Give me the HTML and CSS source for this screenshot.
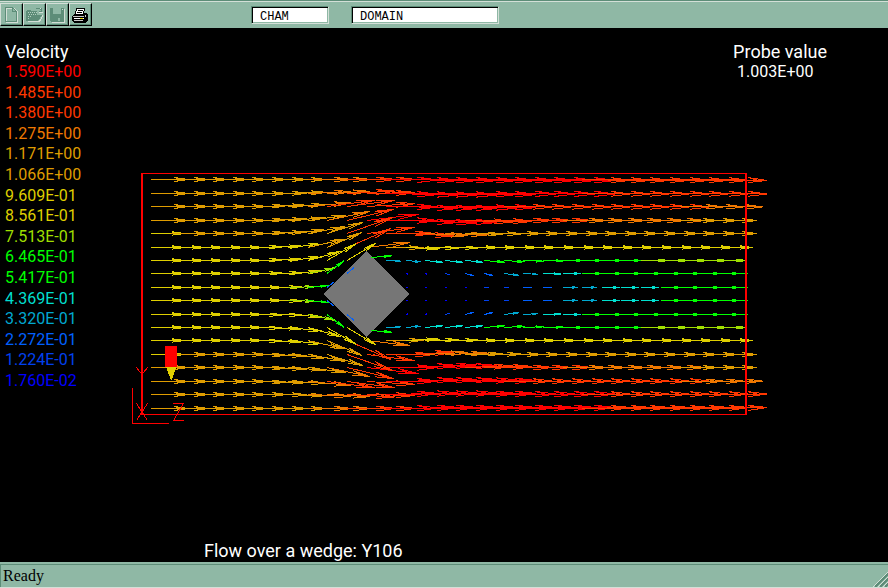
FILE: index.html
```html
<!DOCTYPE html>
<html lang="en">
<head>
<meta charset="utf-8">
<title>Flow over a wedge</title>
<link rel="stylesheet" href="styles.css">
</head>
<body>
<header class="toolbar">
  <div class="tools">
    <button class="tool" type="button" aria-label="New">
      <svg viewBox="0 0 18 18"><path class="hi" d="M4.500 2.500h8l3 3v11h-11z"/><path class="lo" d="M3.500 1.500h7l4 4v10h-11zM10.500 1.500v4h4"/></svg>
    </button>
    <button class="tool" type="button" aria-label="Open">
      <svg viewBox="0 0 18 18"><path class="hi" d="M2.500 15.500h12l4-7M12.500 2.500h3l2 3M13.500 6.500h4"/><path class="fill" d="M1 5h1v-1h4v1h6v4h5l-4 6H1z"/><path class="check" d="M2.500 6.500h9M3.500 8.500h7M2.500 10.500h3M2.500 12.500h2"/><path class="lo" d="M10.500 3.500l1-1h3l2 2M16.500 2v3.500h-3"/></svg>
    </button>
    <button class="tool" type="button" aria-label="Save">
      <svg viewBox="0 0 18 18"><path class="hi" d="M16.500 3v13.500h-13"/><path class="fill" d="M2 2h14v14H3l-1-1z"/><path class="face" d="M5 2h8v6H5zM10 12h2v3h-2z"/><path class="hi" d="M14.500 3v1"/></svg>
    </button>
    <button class="tool" type="button" aria-label="Print">
      <svg viewBox="0 0 18 18"><path d="M2 9l2-2h12l1 2v5l-3 3H3l-2-2v-5z" fill="#000"/><path d="M6 2h8l-2 6H4z" fill="#fff" stroke="#000"/><path d="M7 4.500h5M6 6.500h5" stroke="#000"/><path d="M2 10h11v1H2zM3 14h9v1H3zM14 9l1-1v2l-1 1z" fill="#c8c8c8"/><path d="M3 12h10v1H3z" fill="#fff"/><path d="M9 12h3v1H9z" fill="#e8d800"/></svg>
    </button>
  </div>
  <input class="field field-short" type="text" value="CHAM" aria-label="Patch">
  <input class="field field-long" type="text" value="DOMAIN" aria-label="Object">
</header>
<main class="viewer">
  <svg class="plot" viewBox="0 28 888 534" preserveAspectRatio="xMinYMin meet" role="img" aria-label="Velocity vectors around a wedge">
    <path class="wedge" d="M366 251L409 294L366 337L323 294z"/>
    <g id="vectors"></g>
    <path class="frame" d="M141 173h606v1h-606zM141 414h606v1h-606zM141 173h2v242h-2zM745 173h2v242h-2z"/>
    <path class="axes" d="M132.500 388V423.500H169M136.500 367.500L142 374.500L147.500 367.500M136.500 403.500L147.500 420.500M147.500 403.500L136.500 420.500M172.500 403.500H183.500L173.500 420.500H183.500"/>
    <path class="probe" d="M165 346h12v21h-12z"/>
    <path class="probe-tip" d="M166 367h10l-4 13h-1z"/>
  </svg>
  <section class="legend">
    <h2 class="caption">Velocity</h2>
    <ol class="scale">
      <li class="c-red">1.590E+00</li>
      <li class="c-scarlet">1.485E+00</li>
      <li class="c-scarlet">1.380E+00</li>
      <li class="c-orange">1.275E+00</li>
      <li class="c-amber">1.171E+00</li>
      <li class="c-amber">1.066E+00</li>
      <li class="c-yellow">9.609E-01</li>
      <li class="c-yellow">8.561E-01</li>
      <li class="c-lime">7.513E-01</li>
      <li class="c-green">6.465E-01</li>
      <li class="c-green">5.417E-01</li>
      <li class="c-teal">4.369E-01</li>
      <li class="c-cyan">3.320E-01</li>
      <li class="c-azure">2.272E-01</li>
      <li class="c-blue">1.224E-01</li>
      <li class="c-navy">1.760E-02</li>
    </ol>
  </section>
  <section class="reading">
    <h2 class="caption">Probe value</h2>
    <p class="value">1.003E+00</p>
  </section>
  <p class="title">Flow over a wedge: Y106</p>
</main>
<footer class="status">
  <span class="message">Ready</span>
  <svg class="grip" viewBox="0 0 16 16"><path class="hi" d="M1 16L16 1M6 16L16 6M11 16L16 11"/><path class="grip-lo" d="M3 16L16 3M8 16L16 8M13 16L16 13"/></svg>
</footer>
<script src="field.js"></script>
</body>
</html>
```

FILE: styles.css
```css
* { box-sizing: border-box; }

body {
  margin: 0;
  min-height: 100vh;
  display: flex;
  flex-direction: column;
  background: #000;
  color: #fff;
  font-family: Roboto, "Liberation Sans", sans-serif;
}

h2, p, ol { margin: 0; padding: 0; font-weight: 400; }

.toolbar {
  display: flex;
  height: 28px;
  align-items: flex-start;
  padding-top: 2px;
  background: #8fb8a5;
  border-top: 1px solid #5d8d78;
  box-shadow: inset 0 1px #d3dfd7;
}

.tools { display: flex; width: 251px; }

.tool {
  width: 23px;
  height: 23px;
  padding: 1px;
  background: #8fb8a5;
  border: 1px solid;
  border-color: #d3dfd7 #000 #000 #d3dfd7;
  box-shadow: inset -1px -1px #5d8d78;
}

.tool svg { display: block; width: 18px; height: 18px; fill: none; shape-rendering: crispEdges; }
.hi { stroke: #d3dfd7; fill: none; }
.lo { stroke: #5d8d78; fill: none; }
.fill { fill: #5d8d78; }
.face { fill: #8fb8a5; }
.check { stroke: #b4cfc0; stroke-dasharray: 1 1; }

.field {
  height: 18px;
  margin-top: 3px;
  padding: 3px 8px 0;
  border: 1px solid;
  border-color: #5d8d78 #d3dfd7 #d3dfd7 #5d8d78;
  border-radius: 0;
  box-shadow: inset 1px 1px #000, inset -1px -1px #8fb8a5;
  background: #fff;
  color: #000;
  font: 12px "Liberation Mono", monospace;
}

.field-short { width: 78px; margin-right: 22px; }
.field-long { width: 148px; }

.viewer {
  flex: 1;
  display: grid;
  grid-template: 1fr / 1fr;
}

.viewer > * { grid-area: 1 / 1; }

.plot { width: 100%; shape-rendering: crispEdges; fill: none; }
.wedge { fill: #767676; }
.frame { fill: #f00; }
.axes { stroke: #f00; }
.probe { fill: #f00; }
.probe-tip { fill: #dfcf00; }

.legend { justify-self: start; padding: 13px 0 0 5px; }
.caption, .title { font-size: 18px; line-height: 21px; }
.scale, .value { font-size: 16px; line-height: 20px; }

.scale {
  height: 329px;
  display: flex;
  flex-direction: column;
  justify-content: space-between;
  list-style: none;
}

.value { padding-left: 4px; }
.reading { justify-self: end; padding: 13px 61px 0 0; }
.title { align-self: end; padding: 0 0 1px 204px; }

.c-red { color: #f00; }
.c-scarlet { color: #ff3800; }
.c-orange { color: #ef7800; }
.c-amber { color: #df9c00; }
.c-yellow { color: #dfcf00; }
.c-lime { color: #9fdf00; }
.c-green { color: #0f0; }
.c-teal { color: #00dfcf; }
.c-cyan { color: #00a8d0; }
.c-azure { color: #0060ff; }
.c-blue { color: #0040ef; }
.c-navy { color: #00f; }

#vectors path { stroke: currentColor; }

.status {
  display: flex;
  justify-content: space-between;
  align-items: flex-end;
  height: 26px;
  background: #8fb8a5;
  border-bottom: 1px solid #d3dfd7;
  box-shadow: inset 0 2px #8fb8a5, inset 1px 3px #5d8d78;
  color: #000;
  font: 16px "Liberation Serif", serif;
}

.message { padding: 0 3px 2px; }
.grip { width: 16px; height: 16px; shape-rendering: crispEdges; }
.grip-lo { stroke: #5d8d78; stroke-width: 2; }
```

FILE: field.js
```js
// Speed and colour class for each band of the scale.
const bands = {
  R: [1.53, 'red'], O: [1.42, 'scarlet'], o: [1.28, 'orange'], a: [1.12, 'amber'],
  y: [1.0, 'yellow'], l: [0.82, 'lime'], g: [0.62, 'green'], t: [0.53, 'teal'],
  c: [0.45, 'cyan'], b: [0.27, 'azure'], d: [0.16, 'blue'], n: [0.05, 'navy']
};

// Upper half of the duct, outer wall to centre line. Slopes are in
// hundredths, starting at column 5; later columns use the last one.
const rows = [
  [179, 'aaaaaaaaooOORRRRRRRRRROOOOOOOO', [0, 0, 0, 0, 0, 0, 0, -1, -2]],
  [193, 'aaaaaaaaooOORRRRRRRRRROOOOOOOO', [0, 1, 3, 4, 5, 5, 2, -2, -3, -3, -3, -2, -2, -1]],
  [206, 'aaaaaaaaoOOORRRRRROOOOOOOOOooo', [2, 3, 5, 9, 13, 13, 6, -1, -4, -4, -4, -3, -2, -1]],
  [220, 'aaaaaaaaaoORRRRROOOOOooooooaaa', [2, 4, 7, 13, 21, 24, 12, 0, -4, -5, -4, -3, -2, 0]],
  [233, 'yaaaaaaaaaOOOOooaaaaaaaaaaaaaa', [2, 4, 9, 18, 31, 35, 13, 0, -5, -5, -3, -2, -1, 0]],
  [247, 'yyyyyyyyaaOoayyyyyyyyyyyyyyyyy', [2, 4, 10, 23, 43, 43, 12, -1, -4, -2, -1, 0]],
  [260, 'yyyyyyyyyyygcctttgggggggglllll', [2, 4, 10, 28, 58, 60, 8, -5, -9, -10, -10, -9, -8, -6, -4, -2, 0]],
  [273, 'yyyyyyyylgb--nndbbccttgggggggg', [1, 2, 7, 21, 75, 85, 0, 0, -30, -35, -30, -25, -20, -12, -6, -3, 0]],
  [287, 'yyyyyyylgb---nnnnddbbcctttgggg', [0, 1, 3, 10, 80, 0, 0, 0, 0]]
];

const group = document.getElementById('vectors');

function draw(d, name) {
  const path = document.createElementNS('http://www.w3.org/2000/svg', 'path');
  path.setAttribute('d', d);
  path.setAttribute('class', 'c-' + name);
  group.append(path);
}

function arrow(x, y, length, slope, name) {
  const angle = Math.atan(slope);
  const tipX = x + length * Math.cos(angle);
  const tipY = y + length * Math.sin(angle);
  const barb = length * 0.4;
  let d = `M${x} ${y}L${tipX} ${tipY}`;
  for (const side of [-1, 1]) {
    const back = angle + side * 0.13;
    d += `M${tipX - barb * Math.cos(back)} ${tipY - barb * Math.sin(back)}L${tipX} ${tipY}`;
  }
  // Notch that fills the middle of the head.
  const half = barb * 0.5;
  const inner = angle + 0.13;
  d += `M${tipX - barb * Math.cos(inner)} ${tipY - barb * Math.sin(inner)}L${tipX - half * Math.cos(angle)} ${tipY - half * Math.sin(angle)}`;
  draw(d, name);
}

for (const [y, codes, slopes] of rows) {
  [...codes].forEach((code, k) => {
    if (code === '-') return;
    const [speed, name] = bands[code];
    const slope = (k < 5 ? 0 : slopes[Math.min(k - 5, slopes.length - 1)]) / 100;
    // The vector at the wedge's tip starts on its surface.
    const onWedge = y === 260 && k === 11;
    const x = Math.round(151 + 19.6 * k) + (onWedge ? 4 : 0);
    const lift = onWedge ? -3 : 0;
    const length = Math.max(speed * 34, 2);
    arrow(x, y + lift + 0.5, length, -slope, name);
    arrow(x, 587.5 - y - lift, length, slope, name);
  });
  if (y > 270) draw(`M739 ${y + 0.5}h9M739 ${587.5 - y}h9`, 'green');
}
```
